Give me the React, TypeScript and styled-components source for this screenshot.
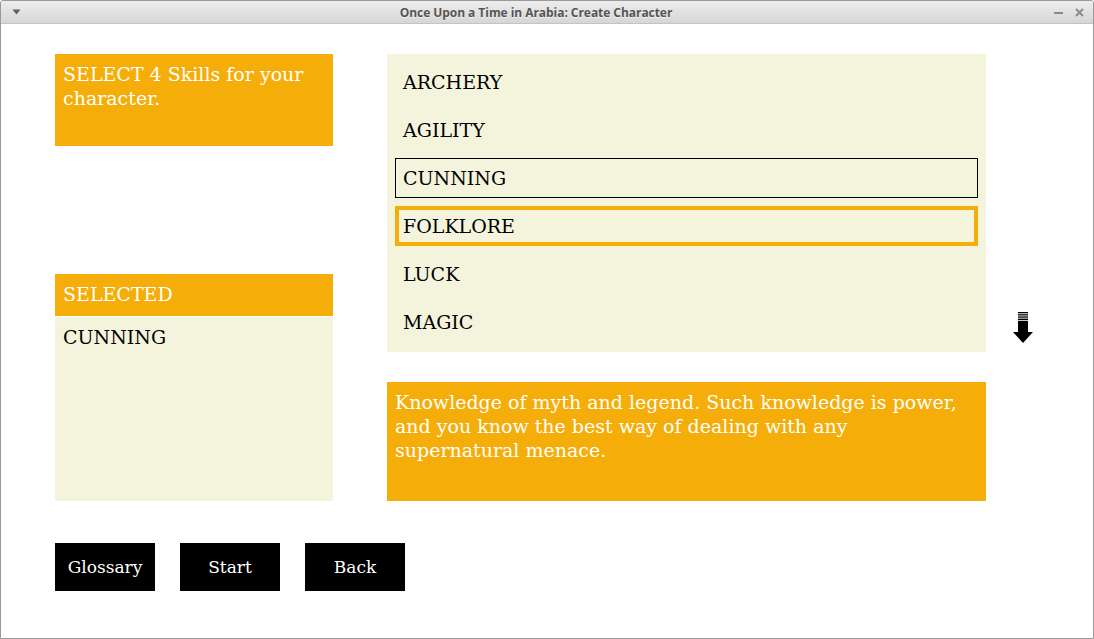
import React from "react";
import styled, { createGlobalStyle } from "styled-components";

const Global = createGlobalStyle`
  html, body { margin: 0; padding: 0; background: #ffffff; }
  body { width: 1094px; height: 639px; overflow: hidden; }
  * { box-sizing: border-box; }
`;

const ORANGE = "#f5ad0a";
const CREAM = "#f4f4dc";
const SERIF = `"DejaVu Serif", "Liberation Serif", serif`;

const Window = styled.div`
  width: 1094px;
  height: 639px;
  border: 1px solid #9a9a9a;
  border-radius: 3px 3px 0 0;
  display: flex;
  flex-direction: column;
  background: #ffffff;
  overflow: hidden;
`;

const TitleBar = styled.div`
  height: 23px;
  flex: 0 0 23px;
  background: linear-gradient(#ededed, #d6d6d6);
  border-bottom: 1px solid #c4c4c4;
  display: grid;
  grid-template-columns: 40px 1fr 40px;
  align-items: center;
`;

const TitleText = styled.div`
  text-align: center;
  padding-right: 22px;
  font-family: "Open Sans", "DejaVu Sans", sans-serif;
  font-weight: 700;
  font-size: 12px;
  letter-spacing: -0.05px;
  color: #555555;
  text-shadow: 0 1px 0 rgba(255, 255, 255, 0.6);
`;

const MenuCaret = styled.div`
  padding-left: 11px;
  display: flex;
  align-items: center;
`;

const WinButtons = styled.div`
  display: flex;
  justify-content: flex-end;
  align-items: center;
  gap: 12px;
  padding-right: 9px;
`;

const Content = styled.div`
  flex: 1;
  padding: 30px 0 0 54px;
  display: flex;
  flex-direction: column;
  gap: 42px;
`;

const MainRow = styled.div`
  display: flex;
  gap: 54px;
  height: 447px;
`;

const LeftColumn = styled.div`
  width: 278px;
  display: flex;
  flex-direction: column;
  justify-content: space-between;
`;

const RightColumn = styled.div`
  display: flex;
  flex-direction: column;
  gap: 30px;
`;

const ListRow = styled.div`
  display: flex;
  align-items: flex-end;
  gap: 26px;
`;

const TextBlock = styled.div<{ $bg: string; $color: string; $h?: number }>`
  background: ${(p) => p.$bg};
  color: ${(p) => p.$color};
  font-family: ${SERIF};
  font-size: 19px;
  line-height: 24px;
  padding: 8px 8px;
  ${(p) => (p.$h ? `height: ${p.$h}px;` : "")}
`;

const SelectedPanel = styled.div`
  height: 227px;
  display: flex;
  flex-direction: column;
  gap: 1px;
`;

const SelectedHeader = styled(TextBlock)`
  height: 42px;
`;

const SelectedList = styled(TextBlock)`
  flex: 1;
`;

const SkillList = styled.div`
  width: 599px;
  height: 298px;
  background: ${CREAM};
  padding: 8px 8px 10px;
  display: flex;
  flex-direction: column;
  gap: 8px;
`;

const SkillItem = styled.div<{ $state?: "focus" | "active" }>`
  height: 40px;
  display: flex;
  align-items: center;
  padding-left: 8px;
  font-family: ${SERIF};
  font-size: 19px;
  color: #000;
  box-shadow: ${(p) =>
    p.$state === "focus"
      ? "inset 0 0 0 1px #000"
      : p.$state === "active"
      ? `inset 0 0 0 4px ${ORANGE}`
      : "none"};
`;

const Description = styled(TextBlock)`
  width: 599px;
  height: 119px;
  padding-right: 20px;
`;

const ArrowBox = styled.div`
  width: 22px;
  height: 34px;
  margin-bottom: 8px;
`;

const ButtonRow = styled.div`
  display: flex;
  gap: 25px;
`;

const ActionButton = styled.button`
  width: 100px;
  height: 48px;
  background: #000;
  color: #fff;
  border: none;
  font-family: ${SERIF};
  font-size: 17px;
  padding: 0;
  cursor: pointer;
`;

const skills = ["ARCHERY", "AGILITY", "CUNNING", "FOLKLORE", "LUCK", "MAGIC"];

export default function App() {
  return (
    <>
      <Global />
      <Window>
        <TitleBar>
          <MenuCaret>
            <svg width="9" height="6" viewBox="0 0 9 6">
              <path d="M0.5 0.5 H8.5 L4.5 5.5 Z" fill="#606060" />
            </svg>
          </MenuCaret>
          <TitleText>Once Upon a Time in Arabia: Create Character</TitleText>
          <WinButtons>
            <svg width="9" height="9" viewBox="0 0 9 9">
              <rect x="0" y="4" width="9" height="2" fill="#8a8a8a" />
            </svg>
            <svg width="9" height="9" viewBox="0 0 9 9">
              <path d="M1 1 L8 8 M8 1 L1 8" stroke="#8a8a8a" strokeWidth="1.8" />
            </svg>
          </WinButtons>
        </TitleBar>
        <Content>
          <MainRow>
            <LeftColumn>
              <TextBlock $bg={ORANGE} $color="#fff" $h={92}>
                SELECT 4 Skills for your character.
              </TextBlock>
              <SelectedPanel>
                <SelectedHeader $bg={ORANGE} $color="#fff">
                  SELECTED
                </SelectedHeader>
                <SelectedList $bg={CREAM} $color="#000">
                  CUNNING
                </SelectedList>
              </SelectedPanel>
            </LeftColumn>
            <RightColumn>
              <ListRow>
                <SkillList>
                  {skills.map((s) => (
                    <SkillItem
                      key={s}
                      $state={s === "CUNNING" ? "focus" : s === "FOLKLORE" ? "active" : undefined}
                    >
                      {s}
                    </SkillItem>
                  ))}
                </SkillList>
                <ArrowBox>
                  <svg width="22" height="34" viewBox="0 0 22 34">
                    <rect x="6" y="2" width="10" height="1.3" fill="#000" />
                    <rect x="6" y="4.2" width="10" height="1.3" fill="#000" />
                    <rect x="6" y="6.4" width="10" height="1.3" fill="#000" />
                    <rect x="6" y="8.6" width="10" height="1.6" fill="#000" />
                    <rect x="6" y="11" width="10" height="12" fill="#000" />
                    <path d="M1 22 H21 L11 33 Z" fill="#000" />
                  </svg>
                </ArrowBox>
              </ListRow>
              <Description $bg={ORANGE} $color="#fff">
                Knowledge of myth and legend. Such knowledge is power, and you know the best way of
                dealing with any supernatural menace.
              </Description>
            </RightColumn>
          </MainRow>
          <ButtonRow>
            <ActionButton>Glossary</ActionButton>
            <ActionButton>Start</ActionButton>
            <ActionButton>Back</ActionButton>
          </ButtonRow>
        </Content>
      </Window>
    </>
  );
}
